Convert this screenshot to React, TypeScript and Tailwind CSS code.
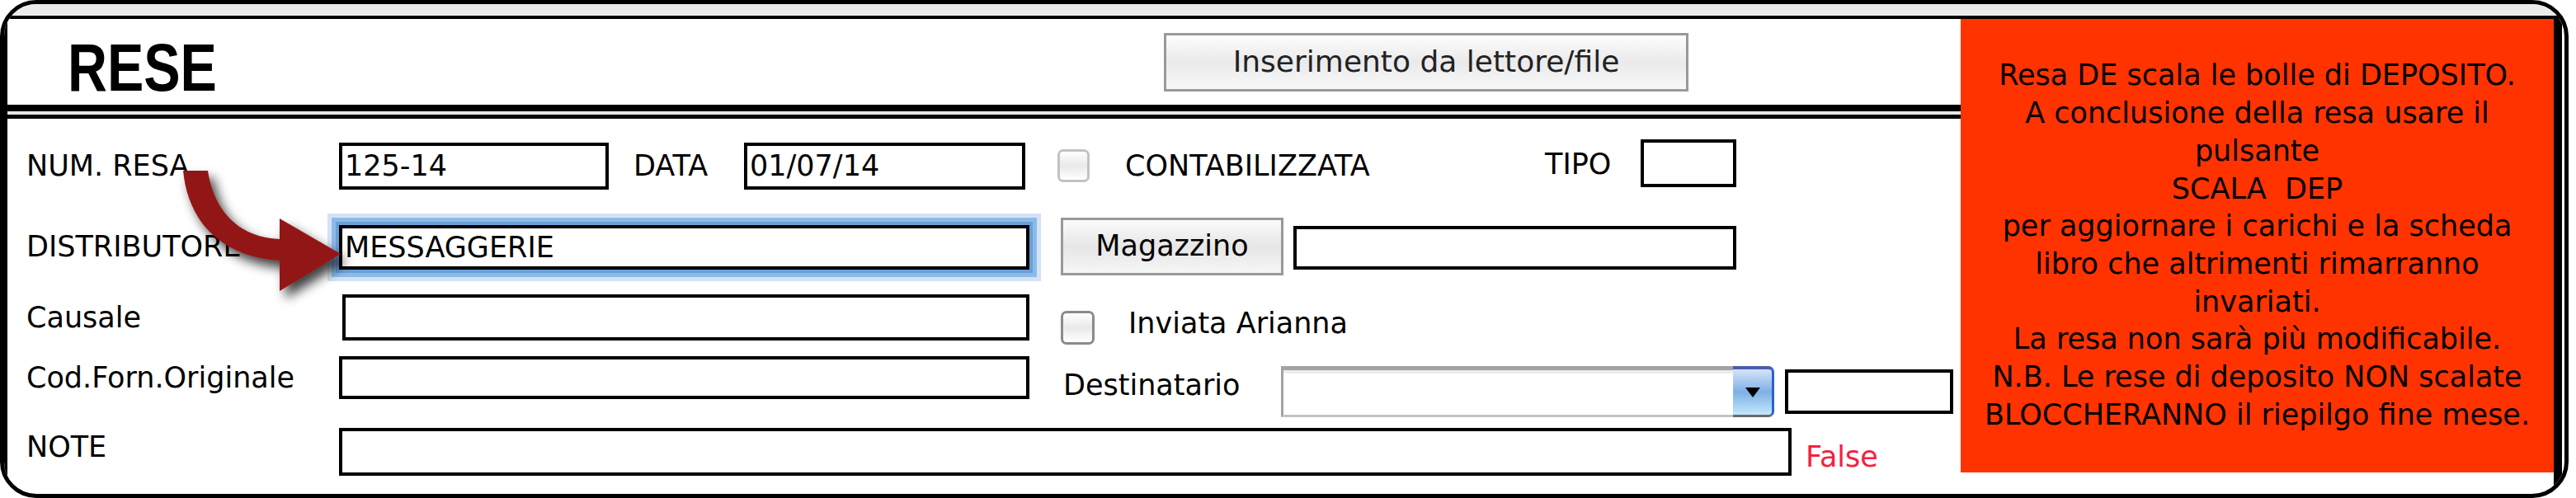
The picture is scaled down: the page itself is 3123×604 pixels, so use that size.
import React from "react";

const sans = "font-['DejaVu_Sans',sans-serif]";

function Box({ className = "", children }: { className?: string; children?: React.ReactNode }) {
  return (
    <div className={`flex shrink-0 items-center border-4 border-black bg-white pl-[3px] text-[35px] leading-none text-black ${className}`}>
      {children}
    </div>
  );
}

function Label({ className = "", children }: { className?: string; children: React.ReactNode }) {
  return <div className={`w-[379px] shrink-0 whitespace-nowrap text-[35px] leading-[40px] text-black ${className}`}>{children}</div>;
}

function Check({ className = "" }: { className?: string }) {
  return (
    <div className={`shrink-0 rounded-[7px] border-[3px] bg-gradient-to-b from-white via-[#e9e9e9] to-white ${className}`} />
  );
}

const notice = [
  "Resa DE scala le bolle di DEPOSITO.",
  "A conclusione della resa usare il",
  "pulsante",
  "SCALA  DEP",
  "per aggiornare i carichi e la scheda",
  "libro che altrimenti rimarranno",
  "invariati.",
  "La resa non sarà più modificabile.",
  "N.B. Le rese di deposito NON scalate",
  "BLOCCHERANNO il riepilgo fine mese.",
];

export default function App() {
  return (
    <div className={`relative h-[604px] w-[3123px] bg-white ${sans}`}>
      <div className="flex h-[604px] w-[3114px] flex-col overflow-hidden rounded-[44px] border-[5px] border-black bg-white">
        <div className="h-[14px] shrink-0 bg-[#ebebeb]" />

        <div className="mr-[3px] flex h-[580px] items-start border-t-4 border-r-[10px] border-black">
          {/* left side: header + form */}
          <div className="flex h-full w-[2372px] shrink-0 flex-col border-l-4 border-black">
            <div className="flex h-[104px] shrink-0 items-center pl-[73px]">
              <div className="mt-[14px] w-[1329px]">
                <span className="inline-block origin-left scale-x-[0.82] font-['Liberation_Sans',sans-serif] text-[81px] font-bold leading-none text-black">
                  RESE
                </span>
              </div>
              <div className="flex h-[71px] w-[636px] items-center justify-center border-[3px] border-[#999] bg-gradient-to-b from-[#fdfdfd] via-[#eaeaea] to-[#f8f8f8] text-[36px] leading-none text-[#222]">
                Inserimento da lettore/file
              </div>
            </div>

            <div className="h-[8px] shrink-0 bg-black" />
            <div className="h-[4px] shrink-0 bg-[#e6e6e6]" />
            <div className="h-[5px] shrink-0 bg-black" />

            <div className="flex flex-col pl-[23px]">
              {/* NUM. RESA */}
              <div className="mt-[28px] flex h-[58px] items-center">
                <Label>NUM. RESA</Label>
                <Box className="h-[57px] w-[327px]">125-14</Box>
                <div className="ml-[30px] w-[134px] text-[35px] leading-[40px]">DATA</div>
                <Box className="h-[57px] w-[341px]">01/07/14</Box>
                <Check className="ml-[39px] h-[40px] w-[39px] border-[#c2c2c2]" />
                <div className="ml-[43px] w-[509px] text-[35px] leading-[40px]">CONTABILIZZATA</div>
                <div className="mb-[4px] w-[116px] text-[35px] leading-[40px]">TIPO</div>
                <Box className="mb-[6px] h-[58px] w-[116px]" />
              </div>

              {/* DISTRIBUTORE */}
              <div className="mt-[34px] flex h-[69px] items-center">
                <Label>DISTRIBUTORE</Label>
                <Box className="mt-[3px] h-[54px] w-[837px] shadow-[0_0_0_4px_#6a9fd8,0_0_0_9px_#8dbae8,0_0_0_14px_#d3e3f6]">
                  MESSAGGERIE
                </Box>
                <div className="ml-[38px] flex h-[70px] w-[270px] items-center justify-center border-[3px] border-[#999] bg-gradient-to-b from-[#fbfbfb] via-[#e6e6e6] to-[#f6f6f6] text-[35px] leading-none text-black">
                  Magazzino
                </div>
                <Box className="ml-[12px] mt-[3px] h-[53px] w-[537px]" />
              </div>

              {/* Causale */}
              <div className="mt-[24px] flex h-[61px] items-start">
                <Label className="flex h-[56px] items-center">Causale</Label>
                <Box className="ml-[4px] h-[56px] w-[833px]" />
                <Check className="ml-[38px] mt-[20px] h-[41px] w-[41px] border-[#8a8a8a]" />
                <div className="ml-[41px] mt-[15px] text-[35px] leading-[40px]">Inviata Arianna</div>
              </div>

              {/* Cod.Forn.Originale */}
              <div className="mt-[14px] flex h-[74px] items-start">
                <Label className="flex h-[52px] items-center">Cod.Forn.Originale</Label>
                <Box className="h-[52px] w-[837px]" />
                <div className="ml-[41px] mt-[15px] w-[264px] text-[35px] leading-[40px]">Destinatario</div>
                <div className="mt-[12px] flex h-[62px] w-[598px] shrink-0">
                  <div className="flex-1 border-[3px] border-r-0 border-t-[5px] border-[#a3a3a3] border-b-[#c4c4c4] bg-white shadow-[inset_0_4px_0_#ececec]" />
                  <div className="flex w-[50px] items-center justify-center rounded-r-[7px] border-t-[4px] border-r-[3px] border-b-[3px] border-t-[#4a5cb0] border-r-[#2d62c4] border-b-[#6a6a6a] bg-gradient-to-b from-[#d4e4f7] via-[#7fb0e6] to-[#c3e8fb]">
                    <svg width="20" height="14" viewBox="0 0 20 14">
                      <polygon points="1,1 19,1 10,13" fill="#000" />
                    </svg>
                  </div>
                </div>
                <Box className="ml-[13px] mt-[16px] h-[54px] w-[204px]" />
              </div>

              {/* NOTE */}
              <div className="mt-[13px] flex h-[58px] items-center">
                <Label className="mb-[13px]">NOTE</Label>
                <Box className="h-[58px] w-[1761px]" />
                <div className="ml-[17px] mt-[12px] text-[35px] leading-[40px] text-[#f5203f]">False</div>
              </div>
            </div>
          </div>

          {/* red notice */}
          <div className="flex h-[550px] w-[719px] shrink-0 flex-col items-center justify-center bg-[#ff3300] text-center text-[35px] leading-[45.7px] text-black">
            {notice.map((line) => (
              <div key={line} className="whitespace-pre">
                {line}
              </div>
            ))}
          </div>
        </div>
      </div>

      <svg className="pointer-events-none absolute left-0 top-0" width={3123} height={604}>
        <defs>
          <filter id="sh" x="-50%" y="-50%" width="200%" height="200%">
            <feDropShadow dx="7" dy="9" stdDeviation="7" floodColor="#000" floodOpacity="0.75" />
          </filter>
        </defs>
        <path
          d="M222 207 L252 207 C258 250 285 288 339 290 L339 265 L413 308 L339 353 L339 316 C270 312 228 270 222 207 Z"
          fill="#931414"
          filter="url(#sh)"
        />
      </svg>
    </div>
  );
}
